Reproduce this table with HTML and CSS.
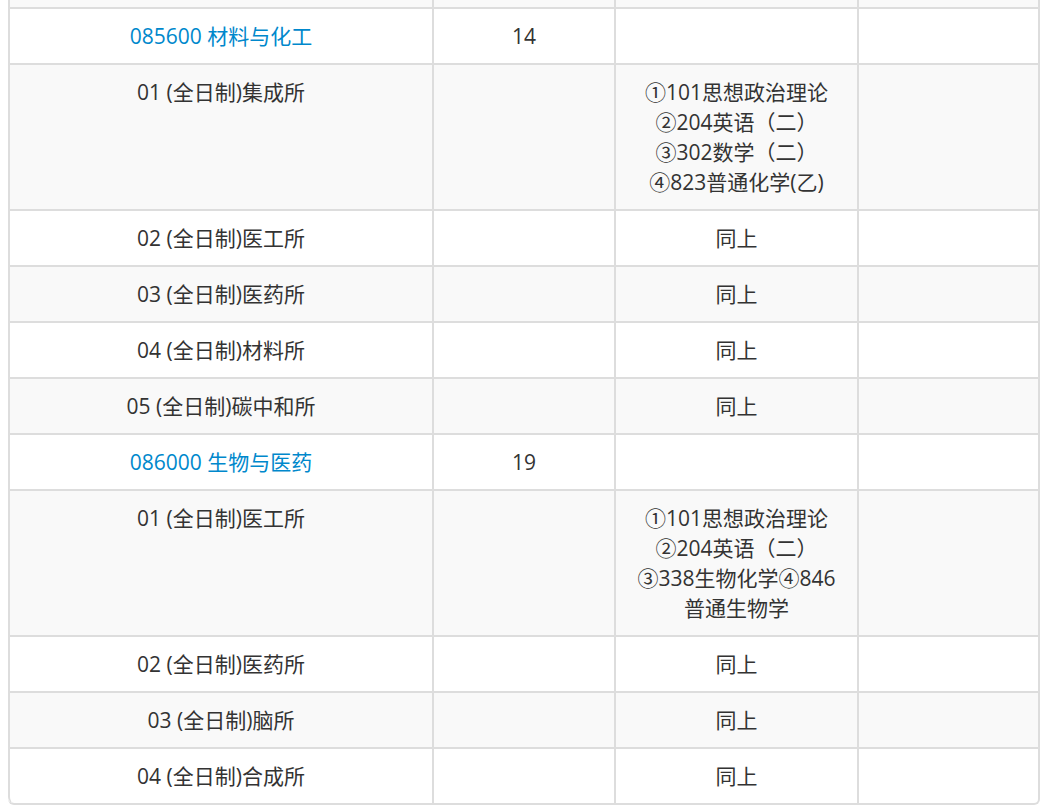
FILE: index.html
```html
<!DOCTYPE html>
<html lang="zh-CN">
<head>
<meta charset="utf-8">
<title>招生目录</title>
<link rel="stylesheet" href="styles.css">
</head>
<body>
<table class="catalog">
  <colgroup>
    <col class="c-name">
    <col class="c-num">
    <col class="c-exam">
    <col class="c-note">
  </colgroup>
  <tbody>
    <tr class="cut"><td></td><td></td><td></td><td></td></tr>
    <tr><td><a class="major" href="#">085600 材料与化工</a></td><td>14</td><td></td><td></td></tr>
    <tr><td>01 (全日制)集成所</td><td></td><td>①101思想政治理论<br>②204英语（二）<br>③302数学（二）<br>④823普通化学(乙)</td><td></td></tr>
    <tr><td>02 (全日制)医工所</td><td></td><td>同上</td><td></td></tr>
    <tr><td>03 (全日制)医药所</td><td></td><td>同上</td><td></td></tr>
    <tr><td>04 (全日制)材料所</td><td></td><td>同上</td><td></td></tr>
    <tr><td>05 (全日制)碳中和所</td><td></td><td>同上</td><td></td></tr>
    <tr><td><a class="major" href="#">086000 生物与医药</a></td><td>19</td><td></td><td></td></tr>
    <tr><td>01 (全日制)医工所</td><td></td><td>①101思想政治理论<br>②204英语（二）<br>③338生物化学④846<br>普通生物学</td><td></td></tr>
    <tr><td>02 (全日制)医药所</td><td></td><td>同上</td><td></td></tr>
    <tr><td>03 (全日制)脑所</td><td></td><td>同上</td><td></td></tr>
    <tr><td>04 (全日制)合成所</td><td></td><td>同上</td><td></td></tr>
  </tbody>
</table>
</body>
</html>
```
FILE: styles.css
```css
html, body {
  margin: 0;
  padding: 0;
  background: #fff;
}
body {
  padding: 0 8px;
  font-family: "Open Sans", "Noto Sans CJK SC", sans-serif;
  font-size: 21px;
  line-height: 30px;
  color: #333;
}
.catalog {
  width: 1032px;
  table-layout: fixed;
  border-collapse: separate;
  border-spacing: 0;
  border-right: 2px solid #ddd;
  border-bottom: 2px solid #ddd;
  border-radius: 0 0 6px 6px;
}
.c-name { width: 424px; }
.c-num { width: 182px; }
.c-exam { width: 243px; }
.catalog td {
  border-left: 2px solid #ddd;
  border-top: 2px solid #ddd;
  padding: 12px;
  text-align: center;
  vertical-align: top;
}
.catalog tr:nth-child(odd) td {
  background: #f9f9f9;
}
.catalog tr.cut td {
  border-top: 0;
  padding: 0;
  height: 7px;
}
.catalog tr:last-child td:first-child {
  border-bottom-left-radius: 6px;
}
.catalog tr:last-child td:last-child {
  border-bottom-right-radius: 6px;
}
.major {
  color: #0088cc;
  text-decoration: none;
}
```
